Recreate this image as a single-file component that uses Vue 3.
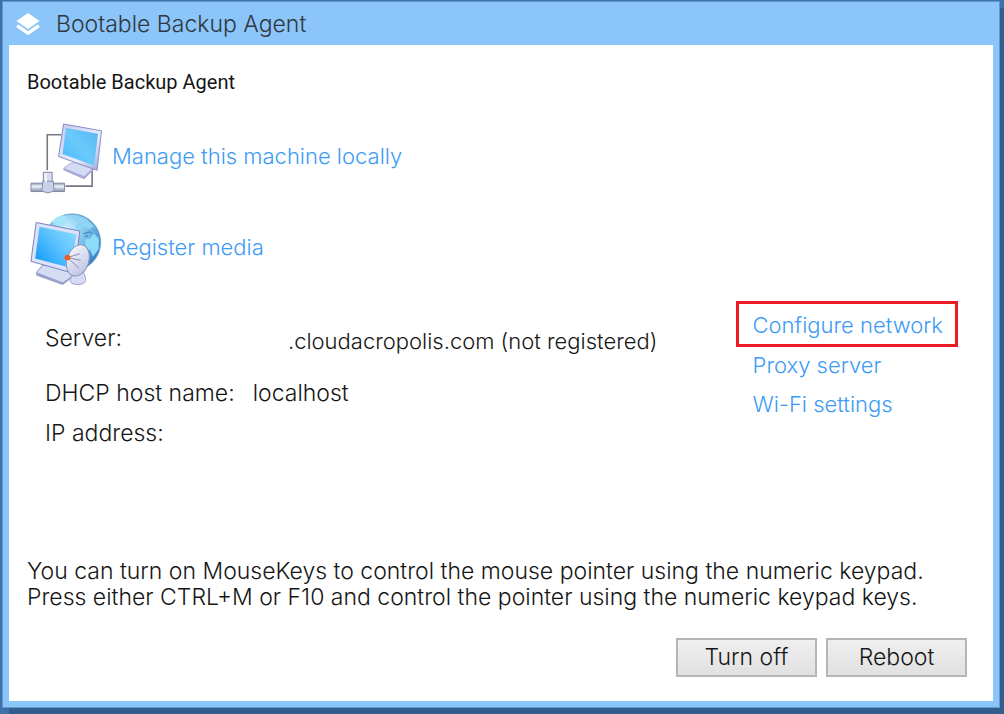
<template>
  <div class="desktop">
    <main class="window">
      <header class="title-bar">
        <svg class="title-icon" viewBox="0 0 24 24" aria-hidden="true">
          <path d="M12 1 L23.5 9 L12 17 L0.5 9 Z" />
          <path d="M0.5 14 L2.5 12.6 L12 19.2 L21.5 12.6 L23.5 14 V15.2 L12 23.2 L0.5 15.2 Z" />
        </svg>
        <span>{{ title }}</span>
      </header>

      <section class="panel">
        <h1 class="heading">{{ title }}</h1>

        <nav class="actions">
          <a href="#manage" class="action">
            <!-- computer attached to a network cable -->
            <svg class="action-icon" viewBox="2 0 73 73" aria-hidden="true">
              <defs>
                <linearGradient id="screen-a" x1="0" y1="1" x2="1" y2="0">
                  <stop offset="0" stop-color="#4bb6fb" />
                  <stop offset="0.5" stop-color="#6bcafb" />
                  <stop offset="1" stop-color="#58b6f5" />
                </linearGradient>
                <linearGradient id="metal" x1="0" y1="0" x2="0" y2="1">
                  <stop offset="0" stop-color="#9299b4" />
                  <stop offset="0.4" stop-color="#eff2fb" />
                  <stop offset="1" stop-color="#818aa9" />
                </linearGradient>
                <linearGradient id="frame-a" x1="0" y1="0" x2="1" y2="1">
                  <stop offset="0" stop-color="#c3c8ec" />
                  <stop offset="0.6" stop-color="#e8edff" />
                  <stop offset="1" stop-color="#9da4d0" />
                </linearGradient>
              </defs>
              <path d="M34 13 H19.5 V49 M65 45 V65 H38" fill="none" stroke="#777783" stroke-width="1.6" />
              <path d="M43 42 L36 47 L57 56 L68 45 L57 40 Z" fill="#d5dbf4" stroke="#a9aed6" />
              <path d="M36 47 V49 L57 58 L68 47 V45 L57 55 Z" fill="#a4aad5" />
              <path d="M36 2 L74.5 9 L70 49 L31 35 Z" fill="url(#frame-a)" stroke="#858bc4" stroke-linejoin="round" />
              <path d="M38.5 6 L71 12 L67 44 L35 32.5 Z" fill="url(#screen-a)" />
              <path d="M15.5 51 H24.5 V61 H15.5 Z" fill="#d7ddef" stroke="#7e86a6" />
              <path d="M3 62 H37 V70.5 H3 Z" fill="url(#metal)" stroke="#8188a6" />
              <path d="M15 60 H25.5 L26.5 70 L20 72 L14 70 Z" fill="#c9d0e9" stroke="#858dad" />
              <path d="M18 52 V61" stroke="#f7f9ff" stroke-width="2" />
            </svg>
            <span>Manage this machine locally</span>
          </a>

          <a href="#register" class="action">
            <!-- computer with globe and satellite dish -->
            <svg class="action-icon" viewBox="1 0 75 76" aria-hidden="true">
              <defs>
                <radialGradient id="globe" cx="0.4" cy="0.25" r="0.8">
                  <stop offset="0" stop-color="#c9f0ff" />
                  <stop offset="0.5" stop-color="#76bce8" />
                  <stop offset="1" stop-color="#2d78bc" />
                </radialGradient>
                <linearGradient id="screen-b" x1="0" y1="0.8" x2="1" y2="0">
                  <stop offset="0" stop-color="#169cf9" />
                  <stop offset="0.55" stop-color="#62c6ff" />
                  <stop offset="1" stop-color="#91dcfb" />
                </linearGradient>
                <linearGradient id="dish" x1="0" y1="0" x2="1" y2="1">
                  <stop offset="0" stop-color="#fbfcff" />
                  <stop offset="1" stop-color="#b7bde3" />
                </linearGradient>
              </defs>
              <circle cx="45" cy="31" r="30" fill="url(#globe)" stroke="#579ac8" />
              <path d="M23 9 Q29 3 36 2.5 L40 5 L36 8 L38 12 L31 14 Z" fill="#a5e5fa" />
              <path d="M42 4 L48 3 L59 6 L68 14 L63 17 L57 15 L53 19 L48 14 L51 10 Z" fill="#8fd5f3" />
              <path d="M59 28 L64 27 L68 22 L73 27 L73 38 L67 46 L64 39 L59 37 Z" fill="#8eddf8" />
              <path d="M57 22 L63 20 L66 21 M58 25 L62 24" fill="none" stroke="#4b93c5" stroke-width="1.6" />
              <path d="M14 55 L7 63 L35 74 L46 66 L45 58 Z" fill="#d7dcf5" stroke="#898fbd" />
              <path d="M7 63 V66 L35 76 L47 67 L35 73 Z" fill="#9ba1cb" />
              <path d="M7 10 L53 19 L47.5 64 L1.5 51 Z" fill="#dce2fa" stroke="#777ebb" stroke-linejoin="round" />
              <path d="M10.5 14.5 L49.5 22.5 L44 58 L6 48 Z" fill="url(#screen-b)" />
              <path d="M48 62 L43 70 Q42 75.5 51 75.5 Q61 75.5 59 68 L56 60 Z" fill="#d8dcf3" stroke="#9ba1cd" />
              <ellipse cx="51" cy="50" rx="11.5" ry="17" transform="rotate(18 51 50)" fill="url(#dish)" stroke="#8d93be" />
              <path d="M40 47 L53 43 M40 47 L52 58 M40 47 L54 50" stroke="#8389a6" />
              <circle cx="40" cy="47" r="3" fill="#ed5b25" />
            </svg>
            <span>Register media</span>
          </a>
        </nav>

        <div class="info">
          <dl class="details">
            <div class="detail detail-server">
              <dt>Server:</dt>
              <dd>.cloudacropolis.com (not registered)</dd>
            </div>
            <div class="detail">
              <dt>DHCP host name:</dt>
              <dd>localhost</dd>
            </div>
            <div class="detail">
              <dt>IP address:</dt>
              <dd></dd>
            </div>
          </dl>

          <nav class="settings">
            <a
              v-for="link in settings"
              :key="link.href"
              :href="link.href"
              class="setting"
              :class="{ highlighted: link.highlighted }"
            >{{ link.label }}</a>
          </nav>
        </div>

        <p class="hint">
          You can turn on MouseKeys to control the mouse pointer using the numeric keypad.<br>
          Press either CTRL+M or F10 and control the pointer using the numeric keypad keys.
        </p>

        <footer class="buttons">
          <button type="button" class="btn">Turn off</button>
          <button type="button" class="btn">Reboot</button>
        </footer>
      </section>
    </main>
  </div>
</template>

<script setup>
const title = 'Bootable Backup Agent'

const settings = [
  { label: 'Configure network', href: '#network', highlighted: true },
  { label: 'Proxy server', href: '#proxy' },
  { label: 'Wi-Fi settings', href: '#wifi' }
]
</script>

<style>
body {
  margin: 0;
}
</style>

<style scoped>
.desktop {
  box-sizing: border-box;
  min-height: 100vh;
  display: flex;
  padding: 1px 4px 6px 2px;
  background: #3d71aa;
  overflow: hidden;
  font-family: Inter, "Liberation Sans", sans-serif;
  font-size: 23px;
  font-weight: 300;
  line-height: 26px;
  color: #161616;
}

.window {
  flex: 1;
  display: flex;
  flex-direction: column;
  padding: 0 6px 6px;
  background: #8bc5f9;
  border: 1px solid #6298cc;
  box-shadow: 7px 7px 0 #315e8d;
}

.title-bar {
  display: flex;
  align-items: center;
  gap: 16px;
  height: 43px;
  padding-left: 7px;
  color: #30383f;
}

.title-icon {
  width: 24px;
  height: 24px;
  fill: #fff;
}

.panel {
  flex: 1;
  display: flex;
  flex-direction: column;
  padding: 24px 26px 24px 18px;
  background: #fff;
}

.heading {
  margin: 0;
  font-family: Roboto, "Liberation Sans", sans-serif;
  font-size: 20px;
  font-weight: 400;
  line-height: 26px;
}

.actions {
  display: flex;
  flex-direction: column;
  align-items: flex-start;
  gap: 19px;
  margin: 27px 0 0 3px;
}

.action {
  display: flex;
  align-items: center;
  gap: 10px;
  color: #3d9bf5;
  font-size: 22px;
  text-decoration: none;
}

.action span {
  padding-bottom: 5px;
}

.action-icon {
  width: 72px;
  height: 72px;
}

.info {
  display: flex;
  justify-content: space-between;
  margin-top: 16px;
}

.details {
  display: flex;
  flex-direction: column;
  gap: 14px;
  margin: 24px 0 0 18px;
}

.detail {
  display: flex;
  gap: 18px;
}

.detail dd {
  margin: 0;
}

.detail-server {
  gap: 166px;
  min-height: 29px;
  margin-bottom: 12px;
}

.detail-server dd {
  align-self: flex-end;
  font-size: 22px;
}

.settings {
  display: flex;
  flex-direction: column;
  align-items: flex-start;
  gap: 13px;
  margin-right: 9px;
  font-size: 22px;
}

.setting {
  padding: 0 17px;
  color: #3d9bf5;
  text-decoration: none;
}

.highlighted {
  padding: 8px 12px 6px 14px;
  margin-bottom: -8px;
  border: 3px solid #ed1c24;
}

.hint {
  margin: auto 0 0;
}

.buttons {
  display: flex;
  justify-content: flex-end;
  gap: 9px;
  margin-top: 28px;
}

.btn {
  width: 141px;
  height: 39px;
  padding: 0 0 2px;
  border: 2px solid #b5b5b5;
  border-radius: 0;
  background: linear-gradient(#efefef, #e1e1e1);
  color: inherit;
  font: inherit;
}
</style>
